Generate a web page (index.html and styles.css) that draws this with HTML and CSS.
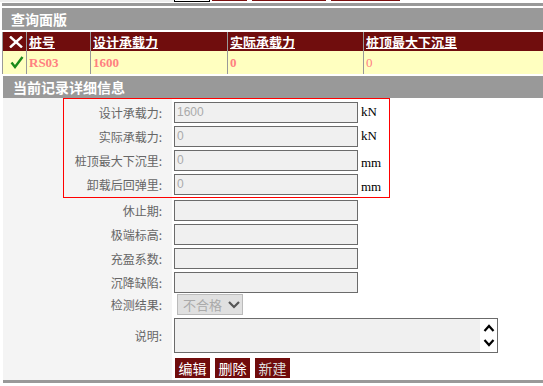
FILE: index.html
```html
<!DOCTYPE html>
<html lang="zh-CN">
<head>
    <meta charset="UTF-8">
    <title>查询面版</title>
    <link rel="stylesheet" href="styles.css">
</head>
<body>
    <div class="top">
        <div class="top-fill"></div>
        <div class="top-input"></div>
        <div class="top-btn w35"></div>
        <div class="top-btn w74"></div>
        <div class="top-btn w69"></div>
    </div>
    <div class="rule"></div>

    <div class="title">查询面版</div>
    <div class="grid">
        <div class="th">
            <svg width="14" height="12" viewBox="0 0 14 12"><path d="M1 0.5 L13 11.5 M13 0.5 L1 11.5" stroke="#fff" stroke-width="2.4"/></svg>
        </div>
        <div class="th"><u>桩号</u></div>
        <div class="th"><u>设计承载力</u></div>
        <div class="th"><u>实际承载力</u></div>
        <div class="th"><u>桩顶最大下沉里</u></div>
        <div class="td">
            <svg width="14" height="13" viewBox="0 0 14 13"><path d="M1.5 6.5 L5 11 L12.5 1" stroke="#1a8a1a" stroke-width="2.4" fill="none"/></svg>
        </div>
        <div class="td val">RS03</div>
        <div class="td val">1600</div>
        <div class="td val">0</div>
        <div class="td val light">0</div>
    </div>

    <div class="title title2">当前记录详细信息</div>
    <div class="detail">
        <div class="box">
            <div class="row">
                <label class="lbl short">设计承载力:</label>
                <input class="field" type="text" value="1600" disabled>
                <span class="unit">kN</span>
            </div>
            <div class="row">
                <label class="lbl short">实际承载力:</label>
                <input class="field" type="text" value="0" disabled>
                <span class="unit">kN</span>
            </div>
            <div class="row">
                <label class="lbl short">桩顶最大下沉里:</label>
                <input class="field" type="text" value="0" disabled>
                <span class="unit low">mm</span>
            </div>
            <div class="row">
                <label class="lbl short">卸载后回弹里:</label>
                <input class="field" type="text" value="0" disabled>
                <span class="unit low">mm</span>
            </div>
        </div>
        <div class="row">
            <label class="lbl">休止期:</label>
            <input class="field" type="text" disabled>
        </div>
        <div class="row">
            <label class="lbl">极端标高:</label>
            <input class="field" type="text" disabled>
        </div>
        <div class="row">
            <label class="lbl">充盈系数:</label>
            <input class="field" type="text" disabled>
        </div>
        <div class="row">
            <label class="lbl">沉降缺陷:</label>
            <input class="field" type="text" disabled>
        </div>
        <div class="row sel-row">
            <label class="lbl">检测结果:</label>
            <div class="select">
                <span>不合格</span>
                <svg width="12" height="8" viewBox="0 0 12 8"><path d="M1 1 L6 6 L11 1" stroke="#555" stroke-width="2.2" fill="none"/></svg>
            </div>
        </div>
        <div class="row memo-row">
            <label class="lbl">说明:</label>
            <div class="memo">
                <textarea disabled></textarea>
                <div class="scroll">
                    <svg width="12" height="8" viewBox="0 0 12 8"><path d="M1.5 7 L6 2 L10.5 7" stroke="#000" stroke-width="2.2" fill="none"/></svg>
                    <svg width="12" height="8" viewBox="0 0 12 8"><path d="M1.5 1 L6 6 L10.5 1" stroke="#000" stroke-width="2.2" fill="none"/></svg>
                </div>
            </div>
        </div>
        <div class="actions">
            <button>编辑</button>
            <button>删除</button>
            <button class="dim">新建</button>
        </div>
    </div>
    <div class="bottom"></div>
</body>
</html>
```

FILE: styles.css
```css
body {
    margin: 0;
    font-family: "Noto Sans CJK SC", "Liberation Sans", sans-serif;
    background: #fff;
}
.top {
    display: flex;
    height: 3px;
    overflow: hidden;
    align-items: flex-start;
}
.top-fill {
    width: 174px;
    height: 2px;
    background: #eee;
}
.top-input {
    width: 34px;
    height: 1px;
    border: 1px solid #000;
    border-top: none;
    background: #fff;
}
.top-btn {
    height: 1px;
    margin-left: 5px;
    background: #7a1010;
}
.top-input + .top-btn {
    margin-left: 2px;
}
.w35 { width: 35px; }
.w74 { width: 74px; }
.w69 { width: 69px; }
.rule {
    height: 3px;
    margin-left: 2px;
    background: #999;
}
.title {
    margin: 2px 0 0 2px;
    height: 22px;
    line-height: 22px;
    padding-left: 9px;
    background: #999;
    color: #fff;
    font-size: 14px;
    font-weight: bold;
}
.title2 {
    margin-left: 3px;
    padding-left: 10px;
}
.grid {
    display: grid;
    grid-template-columns: 23px 63px 136px 135px 1fr;
    grid-template-rows: 19px 23px;
    column-gap: 1px;
    margin: 2px 0 0 2px;
    padding-left: 1px;
    background: #999;
}
.th {
    background: #700d0d;
    color: #fff;
    font-size: 13px;
    font-weight: bold;
    line-height: 19px;
    padding-left: 2px;
}
.th svg, .td svg {
    display: block;
    margin: 4px 0 0 4px;
}
.td {
    background: #ffffc0;
    padding-left: 2px;
}
.td svg {
    margin: 5px 0 0 5px;
}
.val {
    color: #ff8080;
    font-family: "Liberation Serif", serif;
    font-weight: bold;
    font-size: 13px;
    line-height: 23px;
}
.light {
    font-weight: normal;
}
.detail {
    margin-left: 3px;
    padding-bottom: 2px;
    background: linear-gradient(to right, #f4f4f4 169px, #fff 169px);
}
.box {
    margin-left: 60px;
    width: 325px;
    padding: 1px 0;
    border: 1px solid #f00;
}
.row {
    display: flex;
    align-items: center;
    height: 24px;
}
.lbl {
    width: 171px;
    padding-right: 12px;
    box-sizing: border-box;
    text-align: right;
    color: #666;
    font-size: 12px;
}
.lbl.short {
    width: 110px;
}
.field {
    width: 184px;
    height: 21px;
    box-sizing: border-box;
    margin: 0;
    padding: 0 2px;
    border: 1px solid #6b6b6b;
    background: #f0f0f0;
    color: #aaa;
    font-family: "Liberation Sans", sans-serif;
    font-size: 12px;
}
.unit {
    margin-left: 3px;
    font-family: "Liberation Serif", serif;
    font-size: 13px;
    color: #000;
}
.unit.low {
    margin-top: 5px;
}
.sel-row {
    height: 21px;
    margin-bottom: 3px;
}
.select {
    display: flex;
    align-items: center;
    gap: 6px;
    margin-left: 3px;
    width: 66px;
    height: 21px;
    box-sizing: border-box;
    padding-left: 5px;
    border: 1px solid #bbb;
    background: #e0e0e0;
    color: #aaa;
    font-size: 13px;
}
.memo-row {
    height: 35px;
}
.memo {
    display: flex;
    width: 324px;
    height: 35px;
    box-sizing: border-box;
    border: 1px solid #6b6b6b;
    background: #f0f0f0;
}
.memo textarea {
    flex: 1;
    border: none;
    margin: 0;
    resize: none;
    background: #f0f0f0;
}
.scroll {
    width: 17px;
    background: #fff;
    display: flex;
    flex-direction: column;
    align-items: center;
    justify-content: space-around;
    padding: 2px 0;
}
.actions {
    display: flex;
    gap: 5px;
    margin: 5px 0 0 172px;
}
button {
    width: 35px;
    height: 20px;
    padding: 0;
    border: none;
    background: #700c0c;
    color: #fff;
    font-family: "Noto Sans CJK SC", sans-serif;
    font-size: 14px;
    line-height: 20px;
}
button.dim {
    color: #ddd;
}
.bottom {
    margin-left: 3px;
    height: 3px;
    background: #999;
}
```
